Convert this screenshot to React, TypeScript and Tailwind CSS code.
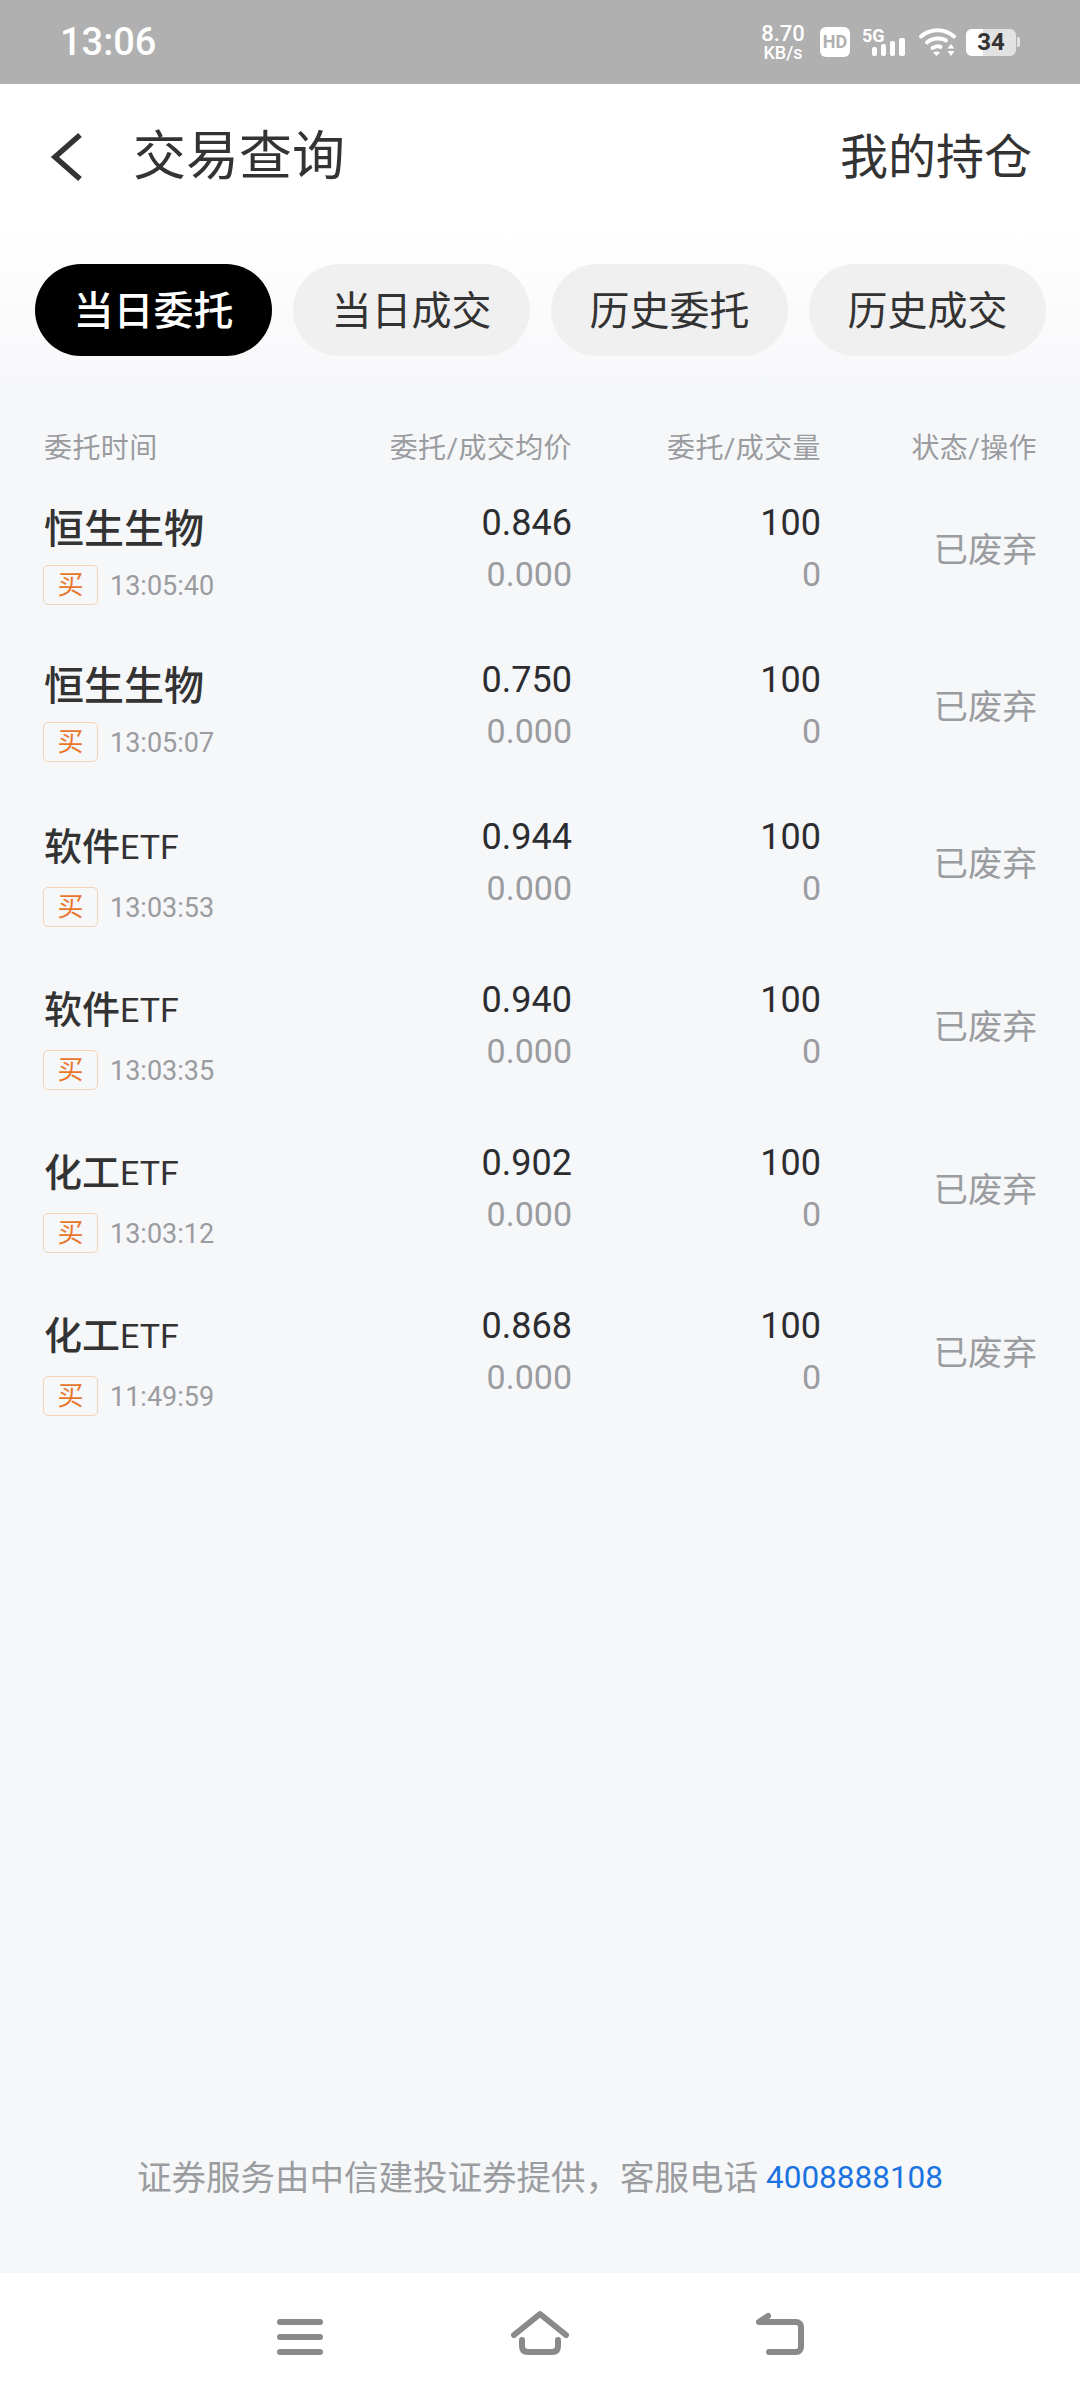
const tabs = ["当日委托", "当日成交", "历史委托", "历史成交"];

const orders = [
  { name: "恒生生物", time: "13:05:40", price: "0.846", etf: false },
  { name: "恒生生物", time: "13:05:07", price: "0.750", etf: false },
  { name: "软件", time: "13:03:53", price: "0.944", etf: true },
  { name: "软件", time: "13:03:35", price: "0.940", etf: true },
  { name: "化工", time: "13:03:12", price: "0.902", etf: true },
  { name: "化工", time: "11:49:59", price: "0.868", etf: true },
];

function StatusIcons() {
  return (
    <div className="flex items-center text-white">
      <div className="-ml-[2px] mr-[2px] flex flex-col items-center w-[48px] font-medium">
        <span className="text-[22px] leading-[20px]">8.70</span>
        <span className="text-[18px] leading-[17px]">KB/s</span>
      </div>
      <div className="ml-[11px] w-[30px] h-[30px] rounded-[6px] bg-white flex items-center justify-center text-[#b0b0b0] text-[18px] leading-none font-bold">
        HD
      </div>
      <div className="ml-[12px] relative w-[44px] h-[30px]">
        <span className="absolute left-0 top-0 text-[18px] leading-[17px] font-bold">5G</span>
        <svg className="absolute inset-0" width="44" height="30" viewBox="0 0 44 30" fill="white">
          <rect x="10" y="20" width="5" height="9" rx="2" />
          <rect x="19" y="17" width="5" height="12" rx="2" />
          <rect x="28" y="14" width="5" height="15" rx="2" />
          <rect x="37" y="11" width="6" height="18" rx="2" />
        </svg>
      </div>
      <svg className="ml-[13px]" width="37" height="30" viewBox="0 0 37 30" fill="none" stroke="white" strokeWidth="4" strokeLinecap="round">
        <path d="M2 9.5C11 1 26 1 35 9.5" />
        <path d="M8 15.5C13.5 10.5 23.5 10.5 27 13.5" />
        <path d="M13.5 21C16 19 20 19 21.5 20" />
        <path d="M17.5 29l-3.5-3.5c2-1.5 5-1.5 7 0z" fill="white" stroke="none" />
        <path d="M32 17l3.5 4.5h-7zM32 29l-3.5-5h7z" fill="white" stroke="none" />
      </svg>
      <div className="ml-[10px] relative w-[50px] h-[27px] rounded-[6px] bg-[#e2e2e2] overflow-hidden flex items-center justify-center">
        <div className="absolute inset-y-0 left-0 w-[17px] bg-white" />
        <span className="relative text-[#333] text-[24px] leading-none font-bold">34</span>
      </div>
      <div className="ml-[1px] w-[3px] h-[10px] rounded-r-[2px] bg-[#e2e2e2]" />
    </div>
  );
}

function OrderRow({ order }: { order: (typeof orders)[number] }) {
  return (
    <div className={`grid grid-cols-[296px_232px_249px_216px] ${order.etf ? "h-[163px]" : "h-[157px]"}`}>
      <div className="pt-[10px]">
        {order.etf ? (
          <div className="h-[52px] pt-[2px] flex items-center leading-none text-[#333]">
            <span className="text-[38px] font-medium">{order.name}</span>
            <span className="text-[34px]">ETF</span>
          </div>
        ) : (
          <div className="h-[44px] pt-[3px] flex items-center text-[40px] leading-none font-medium text-[#333]">
            {order.name}
          </div>
        )}
        <div className="mt-[15px] flex items-center">
          <span className="-ml-[1px] w-[55px] h-[40px] border border-[#f3d3b8] rounded-[5px] flex items-center justify-center text-[26px] leading-none text-[#e8762a]">
            买
          </span>
          <span className="ml-[12px] pt-[3px] text-[27px] leading-none text-[#9a9ca0]">{order.time}</span>
        </div>
      </div>
      <div className="text-right pt-[1px]">
        <div className="text-[36px] leading-[52px] text-[#2b2d31]">{order.price}</div>
        <div className="text-[34px] leading-[50px] text-[#9a9ca0]">0.000</div>
      </div>
      <div className="text-right pt-[1px]">
        <div className="text-[36px] leading-[52px] text-[#2b2d31]">100</div>
        <div className="text-[34px] leading-[50px] text-[#9a9ca0]">0</div>
      </div>
      <div className="h-[108px] flex items-center justify-end text-[34.5px] leading-none text-[#9a9ca0]">
        已废弃
      </div>
    </div>
  );
}

export default function App() {
  return (
    <div className="min-h-[2400px] flex flex-col bg-[#f6f7f9] font-['Roboto','Noto_Sans_CJK_SC',sans-serif]">
      {/* Status bar */}
      <div className="h-[84px] bg-[#b0b0b0] flex items-center justify-between pl-[60px] pr-[60px]">
        <span className="text-[38px] leading-none font-medium text-white">13:06</span>
        <StatusIcons />
      </div>

      {/* Header */}
      <div className="h-[146px] bg-white flex items-center justify-between pl-[50px] pr-[48px]">
        <div className="flex items-center">
          <svg width="34" height="50" viewBox="0 0 34 50" fill="none" stroke="#333" strokeWidth="5.5">
            <path d="M30 3L5 25l25 22" />
          </svg>
          <span className="ml-[49px] text-[53px] leading-none text-[#333]">交易查询</span>
        </div>
        <span className="pt-[2px] text-[48px] leading-none text-[#333]">我的持仓</span>
      </div>

      {/* Tabs */}
      <div className="h-[160px] bg-gradient-to-b from-white to-[#f6f7f9] pt-[34px] pl-[35px] flex gap-[21px]">
        {tabs.map((tab, i) => (
          <div
            key={tab}
            className={`w-[237px] h-[92px] pt-[4px] rounded-full flex items-center justify-center text-[40px] leading-none ${
              i === 0 ? "bg-black text-white font-medium" : "bg-[#f0f0f0] text-[#333]"
            }`}
          >
            {tab}
          </div>
        ))}
      </div>

      {/* Table */}
      <div className="pl-[44px]">
        <div className="grid grid-cols-[296px_232px_249px_216px] h-[106px] items-start pt-[42px] text-[28px] leading-[34px] tracking-[0.4px] text-[#9a9ca0]">
          <div>委托时间</div>
          <div className="text-right">委托/成交均价</div>
          <div className="text-right">委托/成交量</div>
          <div className="text-right">状态/操作</div>
        </div>
        {orders.map((order) => (
          <OrderRow key={order.time} order={order} />
        ))}
      </div>

      {/* Footer note */}
      <div className="mt-auto h-[190px] flex items-start justify-center pt-[73px] text-[34.5px] leading-[44px] text-[#9a9ca0]">
        <span>证券服务由中信建投证券提供，客服电话</span>
        <span className="ml-[8px] text-[31.5px] text-[#1a73e0]">4008888108</span>
      </div>

      {/* Nav bar */}
      <div className="h-[127px] bg-white flex items-start pt-[44px] pl-[277px]">
        <svg width="46" height="40" viewBox="0 0 46 40" fill="none" stroke="#8a8a8a" strokeWidth="6" strokeLinecap="round">
          <path d="M3 5h40M3 20h40M3 35h40" />
        </svg>
        <svg className="ml-[188px] -mt-[7px]" width="58" height="47" viewBox="0 0 58 47" fill="none" stroke="#8a8a8a" strokeWidth="6" strokeLinecap="round" strokeLinejoin="round">
          <path d="M3 25L29 4l26 21" />
          <path d="M11 30v6c0 4 2 6 6 6h24c4 0 6-2 6-6v-6" />
        </svg>
        <svg className="ml-[186px] -mt-[7px]" width="50" height="47" viewBox="0 0 50 47" fill="none" stroke="#8a8a8a" strokeWidth="6" strokeLinecap="round" strokeLinejoin="round">
          <path d="M13 6L4 12h37c3 0 5 2 5 5v20c0 3-2 5-5 5H14" />
        </svg>
      </div>
    </div>
  );
}
